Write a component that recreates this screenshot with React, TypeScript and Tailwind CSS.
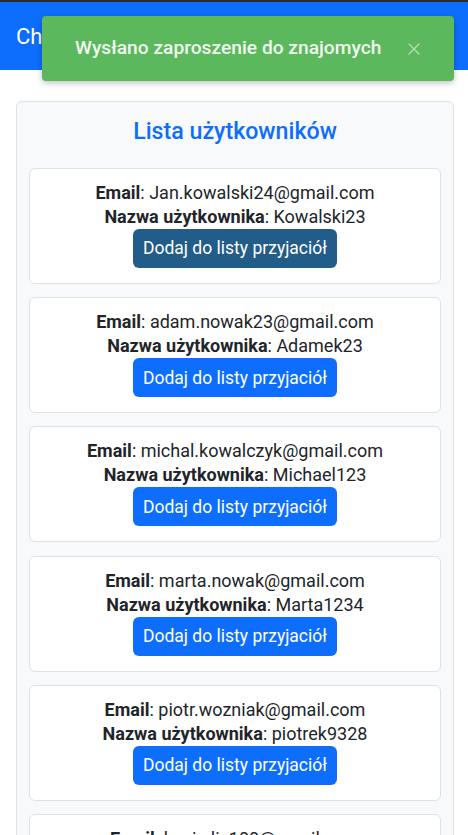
import { X } from 'lucide-react';

type User = {
  email: string;
  username: string;
};

const users: User[] = [
  { email: 'Jan.kowalski24@gmail.com', username: 'Kowalski23' },
  { email: 'adam.nowak23@gmail.com', username: 'Adamek23' },
  { email: 'michal.kowalczyk@gmail.com', username: 'Michael123' },
  { email: 'marta.nowak@gmail.com', username: 'Marta1234' },
  { email: 'piotr.wozniak@gmail.com', username: 'piotrek9328' },
  { email: 'kasia.lis100@gmail.com', username: 'Kasia100' },
];

function UserCell({ user, active }: { user: User; active?: boolean }) {
  return (
    <div className="mb-[13.25px] flex flex-col items-center rounded-[6px] border border-[#dee2e6] bg-white pt-3 pb-[15px] text-center text-[18px] leading-6 text-[#212529]">
      <div>
        <span className="font-bold">Email</span>: {user.email}
      </div>
      <div>
        <span className="font-bold">Nazwa użytkownika</span>: {user.username}
      </div>
      <button
        type="button"
        className={
          active
            ? 'h-[39px] rounded-[6px] bg-[#225c88] px-[10px] text-[17.5px] leading-6 text-white'
            : 'h-[39px] rounded-[6px] bg-[#0d6efd] px-[10px] text-[17.5px] leading-6 text-white'
        }
      >
        Dodaj do listy przyjaciół
      </button>
    </div>
  );
}

export default function App() {
  return (
    <div className="relative h-[835px] overflow-hidden bg-white font-['Roboto',sans-serif]">
      <div className="h-[2px] bg-[#2b2b2b]" />
      <nav className="flex h-[68px] items-center justify-between bg-[#0d6efd] pl-4 pr-[15px]">
        <span className="text-[22px] text-white">Chat</span>
        <div className="h-[40px] w-[67px] rounded-[6px] border border-white/20" />
      </nav>

      <div className="mt-[31px] ml-4 w-[438px] rounded-[6px] border border-[#dee2e6] bg-[#f8f9fa] px-3 pt-4">
        <h3 className="mb-[22px] text-center text-[23.2px] leading-[1.2] font-medium text-[#0d6efd]">
          Lista użytkowników
        </h3>
        {users.map((user, i) => (
          <UserCell key={user.email} user={user} active={i === 0} />
        ))}
      </div>

      <div className="absolute top-4 left-[42px] flex h-[65px] w-[412px] items-center rounded-[4px] bg-[#5cb85c] pr-[30px] pl-[33px] shadow-[0_2px_6px_rgba(0,0,0,0.25)]">
        <span className="flex-1 text-[19.2px] font-medium text-[#f1f8f1]">
          Wysłano zaproszenie do znajomych
        </span>
        <X className="h-[20px] w-[20px] text-[#b9deb9]" strokeWidth={1.5} />
      </div>
    </div>
  );
}
